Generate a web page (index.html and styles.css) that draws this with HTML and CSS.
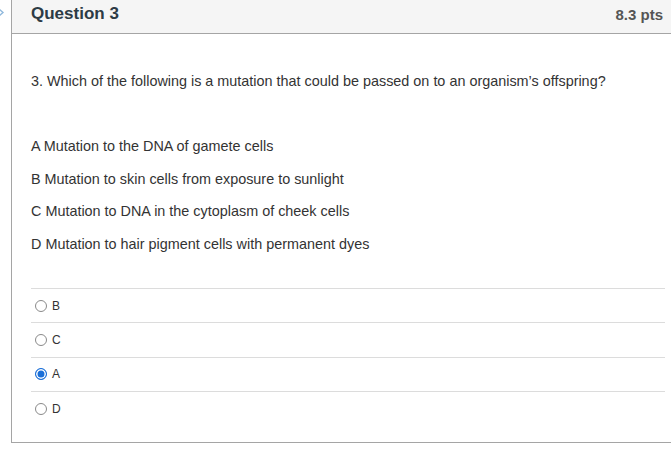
FILE: index.html
```html
<!DOCTYPE html>
<html lang="en">
<head>
    <meta charset="UTF-8">
    <title>Question 3</title>
    <link rel="stylesheet" href="styles.css">
</head>
<body>
    <div class="gutter">
        <svg width="11" height="24" viewBox="0 0 11 24">
            <polyline points="-1,9 3,12.5 -1,16" fill="none" stroke="#8fb8dc" stroke-width="1.4"/>
        </svg>
    </div>
    <div class="question">
        <div class="question-header">
            <span class="title">Question 3</span>
            <span class="points">8.3 pts</span>
        </div>
        <div class="question-body">
            <p class="question-text">3. Which of the following is a mutation that could be passed on to an organism’s offspring?</p>
            <div class="choices">
                <p>A Mutation to the DNA of gamete cells</p>
                <p>B Mutation to skin cells from exposure to sunlight</p>
                <p>C Mutation to DNA in the cytoplasm of cheek cells</p>
                <p>D Mutation to hair pigment cells with permanent dyes</p>
            </div>
            <div class="answers">
                <label class="answer"><span class="radio"></span>B</label>
                <label class="answer"><span class="radio"></span>C</label>
                <label class="answer"><span class="radio checked"></span>A</label>
                <label class="answer"><span class="radio"></span>D</label>
            </div>
        </div>
    </div>
</body>
</html>
```

FILE: styles.css
```css
body {
    margin: 0;
    padding: 0;
    background: #fff;
    font-family: "Liberation Sans", Arial, sans-serif;
    color: #2d3b45;
    display: flex;
    align-items: flex-start;
    overflow: hidden;
}
.gutter {
    width: 11px;
    flex: none;
}
.gutter svg {
    display: block;
}
.question {
    flex: none;
    width: 680px;
    border-left: 1px solid #a5a5a5;
    border-bottom: 1px solid #a5a5a5;
}
.question-header {
    height: 33px;
    background: #f5f5f5;
    border-bottom: 1px solid #a5a5a5;
    display: flex;
    align-items: center;
    justify-content: space-between;
    padding: 0 29px 0 19px;
}
.question-header .title {
    font-size: 17px;
    font-weight: bold;
    color: #2d3b45;
    margin-top: -5px;
}
.question-header .points {
    font-size: 15px;
    font-weight: bold;
    color: #555;
    margin-top: -5px;
}
.question-body {
    padding: 37px 0 17px 19px;
}
.question-text {
    margin: 0;
    font-size: 14.4px;
    line-height: 20px;
    color: #333;
}
.choices {
    margin-top: 45px;
}
.choices p {
    margin: 0 0 12.5px 0;
    font-size: 14.4px;
    line-height: 20px;
    color: #333;
}
.answers {
    margin-top: 34.5px;
    width: 634px;
}
.answer {
    display: flex;
    align-items: center;
    height: 34.3px;
    border-top: 1px solid #dcdcdc;
    font-size: 12px;
    color: #333;
    padding-left: 4px;
    box-sizing: border-box;
}
.radio {
    width: 12px;
    height: 12px;
    border: 1px solid #8a8a8a;
    border-radius: 50%;
    box-sizing: border-box;
    margin-right: 5px;
    background: #fff;
}
.radio.checked {
    border: 1px solid #1a6fd8;
    background: #1a6fd8;
    box-shadow: inset 0 0 0 1.5px #fff;
}
```
